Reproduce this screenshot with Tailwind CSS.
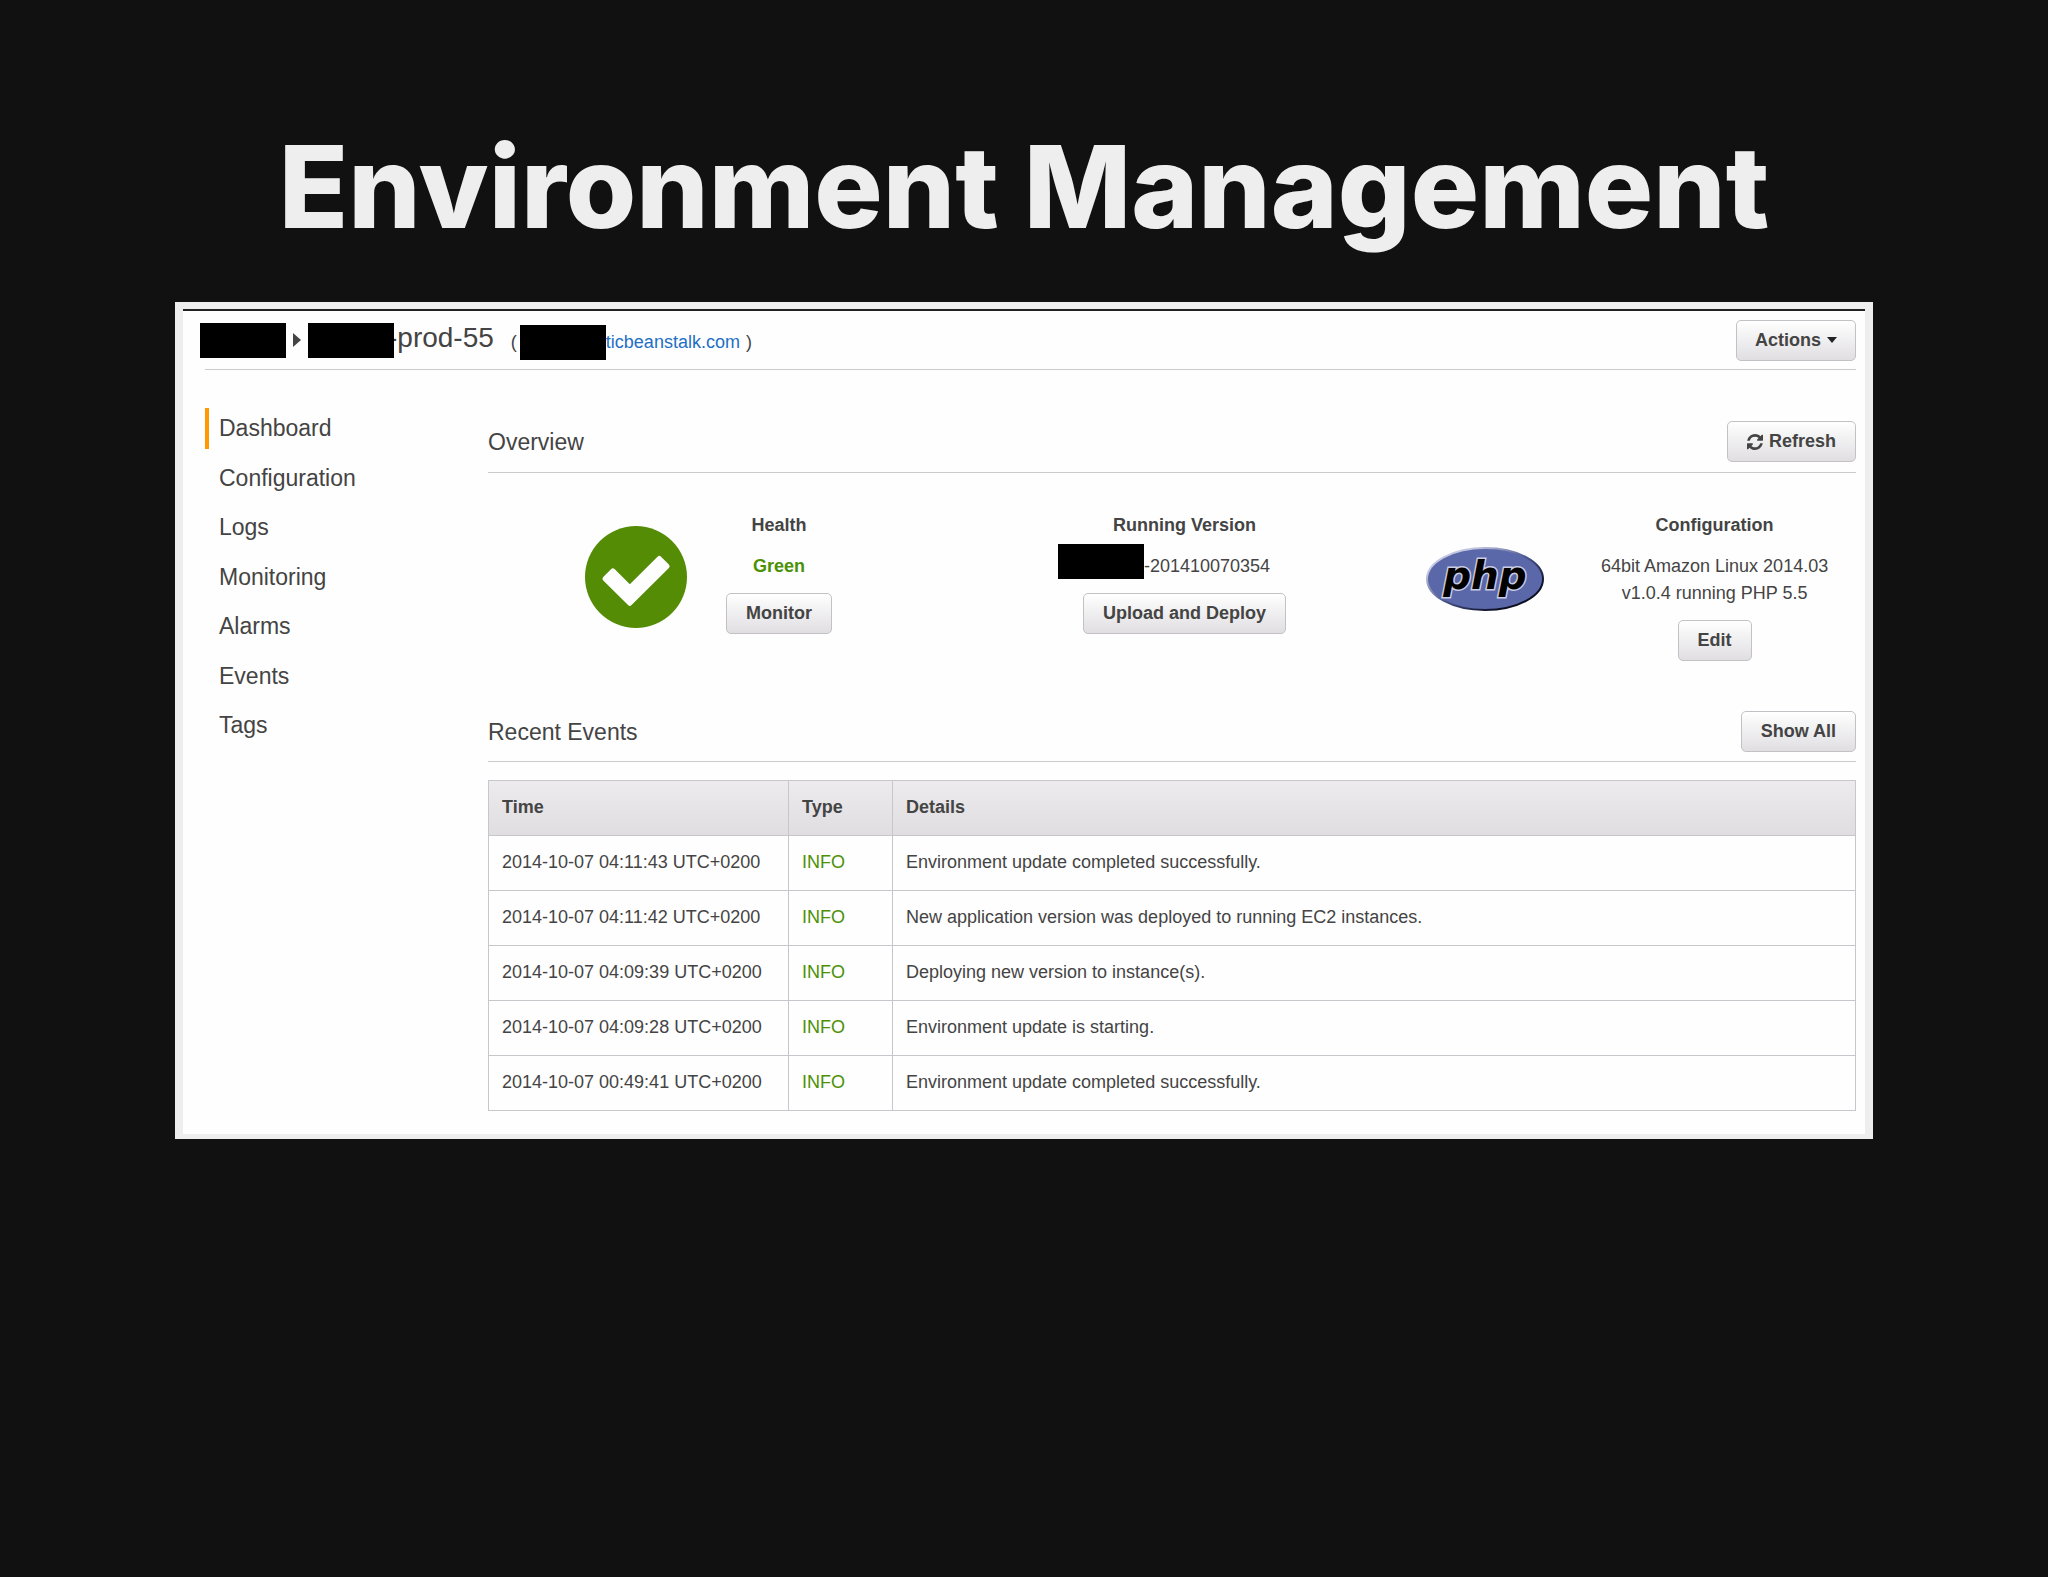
<!DOCTYPE html>
<html lang="en">
<head>
<meta charset="utf-8">
<meta name="viewport" content="width=device-width, initial-scale=1">
<title>Environment Management</title>
<script src="https://cdn.jsdelivr.net/npm/@tailwindcss/browser@4"></script>
</head>
<body class="flex min-h-screen flex-col border-b-5 border-white bg-[#111111] px-[175px] pt-[115px] font-['Liberation_Sans',Arial,sans-serif] text-[18px] leading-[27px] text-[#444444]">
  <h1 class="mb-[43px] text-center font-['Inter',sans-serif] text-[114px] leading-[144px] font-extrabold whitespace-nowrap text-[#eeeeee]">Environment Management</h1>

  <main class="border-8 border-t-7 border-b-5 border-[#eeeeee] bg-[#fefefe] pb-[23px]">
    <div class="border-t-2 border-[#222222]"></div>

    <header class="mr-[9px] ml-[17px] flex h-[58px] items-center">
      <span class="h-[35px] w-[86px] bg-black"></span>
      <svg class="mx-[7px] h-[14px] w-[8px]" viewBox="0 0 8 14" fill="#444444" aria-hidden="true"><path d="M0 0l8 7-8 7z"/></svg>
      <span class="relative z-10 h-[35px] w-[86px] bg-black"></span>
      <h2 class="-ml-[6px] pb-[6px] text-[28px]">-prod-55</h2>
      <span class="ml-[17px] flex items-center pt-[4px]">(<span class="ml-[3px] h-[35px] w-[86px] bg-black"></span><a href="#" class="text-[#1f6fc4]">ticbeanstalk.com</a><span class="ml-[6px]">)</span></span>
      <button type="button" class="ml-auto flex h-[41px] items-center gap-[6px] rounded-[5px] border border-[#c4c1c6] bg-linear-to-b from-white to-[#e0dee1] px-[18px] font-bold">Actions
        <svg class="h-[6px] w-[10px]" viewBox="0 0 10 6" fill="#222222" aria-hidden="true"><path d="M0 0h10L5 6z"/></svg>
      </button>
    </header>
    <div class="mr-[9px] ml-[22px] border-t border-[#cccacd]"></div>

    <div class="mr-[9px] ml-[22px] flex">
      <nav class="mt-[38px] flex h-[338px] w-[283px] shrink-0 flex-col justify-between text-[23px]">
        <a href="#" class="flex h-[41px] items-center border-l-4 border-[#ff9900] pl-[10px]">Dashboard</a>
        <a href="#" class="flex h-[41px] items-center pl-[14px]">Configuration</a>
        <a href="#" class="flex h-[41px] items-center pl-[14px]">Logs</a>
        <a href="#" class="flex h-[41px] items-center pl-[14px]">Monitoring</a>
        <a href="#" class="flex h-[41px] items-center pl-[14px]">Alarms</a>
        <a href="#" class="flex h-[41px] items-center pl-[14px]">Events</a>
        <a href="#" class="flex h-[41px] items-center pl-[14px]">Tags</a>
      </nav>

      <div class="flex-1">
        <section>
          <div class="mt-[51px] flex items-start justify-between border-b border-[#cccacd] pb-[10px]">
            <h3 class="flex h-[41px] items-center pt-[2px] text-[23px]">Overview</h3>
            <button type="button" class="flex h-[41px] items-center gap-[6px] rounded-[5px] border border-[#c4c1c6] bg-linear-to-b from-white to-[#e0dee1] px-[19px] font-bold">
              <svg class="size-[16px]" viewBox="0 0 1536 1536" fill="#444444" aria-hidden="true"><path d="M1511 928q0 5-1 7-64 268-268 434.500T764 1536q-146 0-282.500-55T238 1324l-129 129q-19 19-45 19t-45-19-19-45V960q0-26 19-45t45-19h448q26 0 45 19t19 45-19 45l-137 137q71 66 161 102t187 36q134 0 250-65t186-179q11-17 53-117 8-23 30-23h192q13 0 22.500 9.500t9.500 22.500zM1536 128v448q0 26-19 45t-45 19h-448q-26 0-45-19t-19-45 19-45l138-138Q969 256 768 256q-134 0-250 65T332 500q-11 17-53 117-8 23-30 23H50q-13 0-22.500-9.500T18 608v-7q65-268 270-434.500T768 0q146 0 284 55.500T1297 212l130-129q19-19 45-19t45 19 19 45z"/></svg>
              Refresh
            </button>
          </div>

          <div class="grid h-[238px] grid-cols-3 pt-[39px] text-center">
            <div class="flex items-start pl-[97px]">
              <svg class="mt-[14px] mr-[39px] size-[102px] shrink-0" viewBox="0 0 102 102" role="img" aria-label="Healthy"><circle cx="51" cy="51" r="51" fill="#548c05"/><path d="M20 52.700L27.800 44.900 44.800 61.700 74.300 32.400 82.100 40.200 44.800 77.300z" fill="#fefefe" stroke="#fefefe" stroke-width="5" stroke-linejoin="round"/></svg>
              <div class="flex flex-col items-center">
                <h4 class="font-bold">Health</h4>
                <p class="mt-[14px] font-bold text-[#4b9105]">Green</p>
                <button type="button" class="mt-[13px] h-[41px] rounded-[5px] border border-[#c4c1c6] bg-linear-to-b from-white to-[#e0dee1] px-[19px] font-bold">Monitor</button>
              </div>
            </div>
            <div class="flex items-start pl-[139px]">
              <div class="flex flex-col items-center">
                <h4 class="font-bold">Running Version</h4>
                <p class="relative mt-[14px] pl-[45px]"><span class="absolute -top-[9px] -left-[41px] h-[35px] w-[86px] bg-black"></span>-201410070354</p>
                <button type="button" class="mt-[13px] h-[41px] rounded-[5px] border border-[#c4c1c6] bg-linear-to-b from-white to-[#e0dee1] px-[19px] font-bold whitespace-nowrap">Upload and Deploy</button>
              </div>
            </div>
            <div class="flex items-start pl-[26px]">
              <svg class="mt-[35px] mr-[57px] h-[64px] w-[118px] shrink-0" viewBox="0 0 118 64" role="img" aria-label="PHP">
                <defs><linearGradient id="rim" x1="0" y1="0" x2="1" y2="1"><stop offset="0.2" stop-color="#c5c8e2"/><stop offset="0.5" stop-color="#4a568f"/><stop offset="0.8" stop-color="#0c0e22"/></linearGradient></defs>
                <ellipse cx="59" cy="32" rx="58" ry="31" fill="#5a67a9" stroke="url(#rim)" stroke-width="2"/>
                <text x="59" y="42" text-anchor="middle" font-family="DejaVu Sans" font-size="39" font-weight="bold" font-style="italic" fill="#000000" stroke="#c9cce3" stroke-width="3" paint-order="stroke">php</text>
              </svg>
              <div class="flex flex-col items-center whitespace-nowrap">
                <h4 class="font-bold">Configuration</h4>
                <p class="mt-[14px]">64bit Amazon Linux 2014.03<br>v1.0.4 running PHP 5.5</p>
                <button type="button" class="mt-[13px] h-[41px] rounded-[5px] border border-[#c4c1c6] bg-linear-to-b from-white to-[#e0dee1] px-[19px] font-bold">Edit</button>
              </div>
            </div>
          </div>
        </section>

        <section>
          <div class="mb-[18px] flex items-start justify-between border-b border-[#cccacd] pb-[9px]">
            <h3 class="flex h-[41px] items-center pt-[2px] text-[23px]">Recent Events</h3>
            <button type="button" class="h-[41px] rounded-[5px] border border-[#c4c1c6] bg-linear-to-b from-white to-[#e0dee1] px-[19px] font-bold">Show All</button>
          </div>
          <table class="w-full border-collapse text-left">
            <thead class="bg-linear-to-b from-[#edebee] to-[#dfdde0]">
              <tr class="h-[55px]">
                <th class="w-[300px] border border-[#c9c6cb] px-[13px] pb-[2px]">Time</th>
                <th class="w-[104px] border border-[#c9c6cb] px-[13px] pb-[2px]">Type</th>
                <th class="border border-[#c9c6cb] px-[13px] pb-[2px]">Details</th>
              </tr>
            </thead>
            <tbody>
              <tr class="h-[55px]"><td class="border border-[#c9c6cb] px-[13px] pb-[2px]">2014-10-07 04:11:43 UTC+0200</td><td class="border border-[#c9c6cb] px-[13px] pb-[2px] text-[#4b9105]">INFO</td><td class="border border-[#c9c6cb] px-[13px] pb-[2px]">Environment update completed successfully.</td></tr>
              <tr class="h-[55px]"><td class="border border-[#c9c6cb] px-[13px] pb-[2px]">2014-10-07 04:11:42 UTC+0200</td><td class="border border-[#c9c6cb] px-[13px] pb-[2px] text-[#4b9105]">INFO</td><td class="border border-[#c9c6cb] px-[13px] pb-[2px]">New application version was deployed to running EC2 instances.</td></tr>
              <tr class="h-[55px]"><td class="border border-[#c9c6cb] px-[13px] pb-[2px]">2014-10-07 04:09:39 UTC+0200</td><td class="border border-[#c9c6cb] px-[13px] pb-[2px] text-[#4b9105]">INFO</td><td class="border border-[#c9c6cb] px-[13px] pb-[2px]">Deploying new version to instance(s).</td></tr>
              <tr class="h-[55px]"><td class="border border-[#c9c6cb] px-[13px] pb-[2px]">2014-10-07 04:09:28 UTC+0200</td><td class="border border-[#c9c6cb] px-[13px] pb-[2px] text-[#4b9105]">INFO</td><td class="border border-[#c9c6cb] px-[13px] pb-[2px]">Environment update is starting.</td></tr>
              <tr class="h-[55px]"><td class="border border-[#c9c6cb] px-[13px] pb-[2px]">2014-10-07 00:49:41 UTC+0200</td><td class="border border-[#c9c6cb] px-[13px] pb-[2px] text-[#4b9105]">INFO</td><td class="border border-[#c9c6cb] px-[13px] pb-[2px]">Environment update completed successfully.</td></tr>
            </tbody>
          </table>
        </section>
      </div>
    </div>
  </main>
</body>
</html>
